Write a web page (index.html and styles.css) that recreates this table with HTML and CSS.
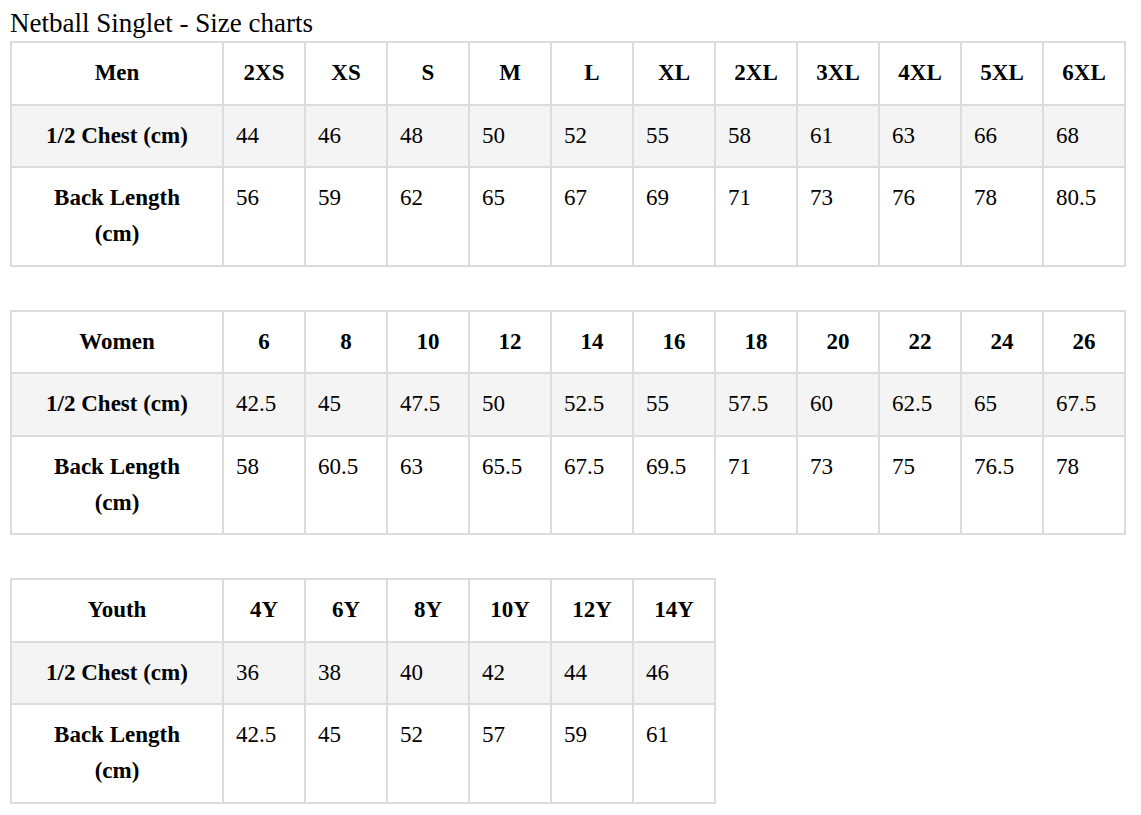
FILE: index.html
```html
<!DOCTYPE html>
<html>
<head>
<meta charset="utf-8">
<title>Netball Singlet - Size charts</title>
<link rel="stylesheet" href="styles.css">
</head>
<body>
<h1 class="title">Netball Singlet - Size charts</h1>

<table class="chart chart-wide">
  <colgroup><col class="c-label"><col class="c-size"><col class="c-size"><col class="c-size"><col class="c-size"><col class="c-size"><col class="c-size"><col class="c-size"><col class="c-size"><col class="c-size"><col class="c-size"><col class="c-size"></colgroup>
  <tr class="head"><th>Men</th><th>2XS</th><th>XS</th><th>S</th><th>M</th><th>L</th><th>XL</th><th>2XL</th><th>3XL</th><th>4XL</th><th>5XL</th><th>6XL</th></tr>
  <tr class="alt"><th>1/2 Chest (cm)</th><td>44</td><td>46</td><td>48</td><td>50</td><td>52</td><td>55</td><td>58</td><td>61</td><td>63</td><td>66</td><td>68</td></tr>
  <tr><th>Back Length (cm)</th><td>56</td><td>59</td><td>62</td><td>65</td><td>67</td><td>69</td><td>71</td><td>73</td><td>76</td><td>78</td><td>80.5</td></tr>
</table>

<table class="chart chart-wide">
  <colgroup><col class="c-label"><col class="c-size"><col class="c-size"><col class="c-size"><col class="c-size"><col class="c-size"><col class="c-size"><col class="c-size"><col class="c-size"><col class="c-size"><col class="c-size"><col class="c-size"></colgroup>
  <tr class="head"><th>Women</th><th>6</th><th>8</th><th>10</th><th>12</th><th>14</th><th>16</th><th>18</th><th>20</th><th>22</th><th>24</th><th>26</th></tr>
  <tr class="alt"><th>1/2 Chest (cm)</th><td>42.5</td><td>45</td><td>47.5</td><td>50</td><td>52.5</td><td>55</td><td>57.5</td><td>60</td><td>62.5</td><td>65</td><td>67.5</td></tr>
  <tr><th>Back Length (cm)</th><td>58</td><td>60.5</td><td>63</td><td>65.5</td><td>67.5</td><td>69.5</td><td>71</td><td>73</td><td>75</td><td>76.5</td><td>78</td></tr>
</table>

<table class="chart chart-narrow">
  <colgroup><col class="c-label"><col class="c-size"><col class="c-size"><col class="c-size"><col class="c-size"><col class="c-size"><col class="c-size"></colgroup>
  <tr class="head"><th>Youth</th><th>4Y</th><th>6Y</th><th>8Y</th><th>10Y</th><th>12Y</th><th>14Y</th></tr>
  <tr class="alt"><th>1/2 Chest (cm)</th><td>36</td><td>38</td><td>40</td><td>42</td><td>44</td><td>46</td></tr>
  <tr><th>Back Length (cm)</th><td>42.5</td><td>45</td><td>52</td><td>57</td><td>59</td><td>61</td></tr>
</table>
</body>
</html>
```

FILE: styles.css
```css
html, body {
  margin: 0;
  background: #ffffff;
}

body {
  padding: 8px 10px 0;
  font-family: "Liberation Serif", "Times New Roman", serif;
  color: #000;
}

.title {
  margin: 0 0 2px;
  font-size: 27px;
  font-weight: normal;
  line-height: 31px;
}

.chart {
  border-collapse: collapse;
  table-layout: fixed;
  font-size: 23px;
  line-height: 36px;
  margin-bottom: 43px;
}

.chart-wide { width: 1115px; }
.chart-narrow { width: 705px; }

.c-label { width: 212px; }
.c-size { width: 82px; }

.chart th,
.chart td {
  border: 2px solid #dcdcdc;
  padding: 12px 12px 12.5px;
  vertical-align: top;
}

.chart th {
  font-weight: bold;
  text-align: center;
  vertical-align: middle;
}

.chart th:first-child {
  padding-left: 22px;
  padding-right: 22px;
}

.chart td {
  text-align: left;
}

.chart .alt th,
.chart .alt td {
  background: #f4f4f4;
  vertical-align: middle;
}
```
